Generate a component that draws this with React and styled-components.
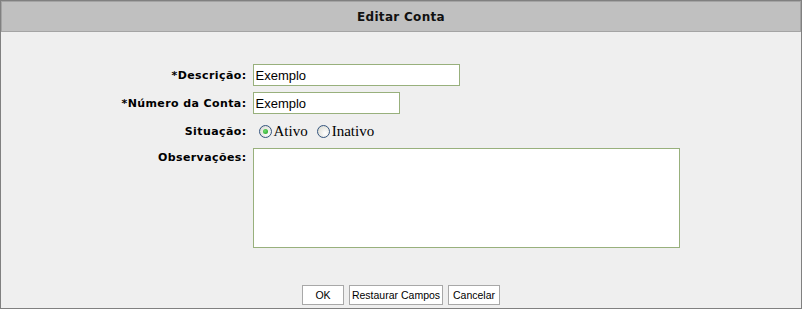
import React, { useState } from "react";
import styled, { createGlobalStyle } from "styled-components";

const GlobalStyle = createGlobalStyle`
    html, body {
        margin: 0;
        padding: 0;
        background: #ffffff;
    }
`;

const Frame = styled.div`
    width: 800px;
    height: 307px;
    border: 1px solid #808080;
    background: #efefef;
    display: flex;
    flex-direction: column;
`;

const Header = styled.div`
    height: 29px;
    border: 1px solid #a4a4a4;
    background: #c0c0c0;
    display: flex;
    align-items: center;
    justify-content: center;
    font-family: "DejaVu Sans", Verdana, sans-serif;
    font-size: 12px;
    font-weight: bold;
    letter-spacing: 0.3px;
    color: #111;
`;

const Form = styled.form`
    flex: 1;
    display: flex;
    flex-direction: column;
    align-items: center;
    padding-top: 32px;
`;

const Grid = styled.div`
    display: grid;
    grid-template-columns: 124px 427px;
    column-gap: 6px;
    row-gap: 6px;
`;

const Label = styled.label`
    font-family: "DejaVu Sans", Verdana, sans-serif;
    font-size: 11px;
    font-weight: bold;
    letter-spacing: 0.4px;
    color: #000;
    text-align: right;
    white-space: nowrap;
    display: flex;
    justify-content: flex-end;
    align-items: ${(p) => (p.$top ? "flex-start" : "center")};
    padding-top: ${(p) => (p.$top ? "3px" : "0")};
`;

const TextInput = styled.input`
    box-sizing: border-box;
    width: ${(p) => p.$w}px;
    height: 22px;
    border: 1px solid #98b07c;
    background: #fff;
    padding: 0 2px;
    font-family: "Liberation Sans", Arial, sans-serif;
    font-size: 13px;
    color: #000;
    outline: none;
`;

const TextArea = styled.textarea`
    box-sizing: border-box;
    width: 427px;
    height: 100px;
    border: 1px solid #98b07c;
    background: #fff;
    resize: none;
    outline: none;
    margin: 0;
    display: block;
`;

const RadioRow = styled.div`
    display: flex;
    align-items: center;
    height: 22px;
    padding-left: 6px;
    font-family: "Liberation Serif", "Times New Roman", serif;
    font-size: 15px;
    color: #000;
`;

const RadioLabel = styled.label`
    display: flex;
    align-items: center;
    margin-right: 9px;
    cursor: pointer;
`;

const Radio = styled.input`
    appearance: none;
    width: 13px;
    height: 13px;
    margin: 0 2px 0 0;
    border: 1px solid #34557e;
    border-radius: 50%;
    background: radial-gradient(circle at 65% 65%, #ffffff 0%, #e6e6e0 60%, #cfcfc8 100%);
    position: relative;
    &:checked::after {
        content: "";
        position: absolute;
        left: 3px;
        top: 3px;
        width: 5px;
        height: 5px;
        border-radius: 50%;
        background: radial-gradient(circle at 40% 40%, #6fe06f, #1f9a1f);
    }
`;

const Buttons = styled.div`
    display: flex;
    gap: 5px;
    margin-top: 37px;
`;

const Button = styled.button`
    box-sizing: border-box;
    width: ${(p) => p.$w}px;
    height: 20px;
    padding: 0;
    border: 1px solid #a8a8a8;
    background: #ffffff;
    font-family: "Liberation Sans", Arial, sans-serif;
    font-size: 10.5px;
    color: #000;
    white-space: nowrap;
    cursor: pointer;
`;

const App = () => {
    const [descricao, setDescricao] = useState("Exemplo");
    const [numero, setNumero] = useState("Exemplo");
    const [situacao, setSituacao] = useState("ativo");
    const [obs, setObs] = useState("");

    function restaurar() {
        setDescricao("Exemplo");
        setNumero("Exemplo");
        setSituacao("ativo");
        setObs("");
    }

    return (
        <>
            <GlobalStyle />
            <Frame>
                <Header>Editar Conta</Header>
                <Form onSubmit={(e) => e.preventDefault()}>
                    <Grid>
                        <Label htmlFor="descricao">*Descrição:</Label>
                        <TextInput id="descricao" $w={207} value={descricao} onChange={(e) => setDescricao(e.target.value)} />

                        <Label htmlFor="numero">*Número da Conta:</Label>
                        <TextInput id="numero" $w={147} value={numero} onChange={(e) => setNumero(e.target.value)} />

                        <Label>Situação:</Label>
                        <RadioRow>
                            <RadioLabel>
                                <Radio type="radio" name="situacao" checked={situacao === "ativo"} onChange={() => setSituacao("ativo")} />
                                Ativo
                            </RadioLabel>
                            <RadioLabel>
                                <Radio type="radio" name="situacao" checked={situacao === "inativo"} onChange={() => setSituacao("inativo")} />
                                Inativo
                            </RadioLabel>
                        </RadioRow>

                        <Label htmlFor="obs" $top>Observações:</Label>
                        <TextArea id="obs" value={obs} onChange={(e) => setObs(e.target.value)} />
                    </Grid>
                    <Buttons>
                        <Button type="submit" $w={42}>OK</Button>
                        <Button type="button" $w={94} onClick={restaurar}>Restaurar Campos</Button>
                        <Button type="button" $w={52}>Cancelar</Button>
                    </Buttons>
                </Form>
            </Frame>
        </>
    );
};

export default App;
